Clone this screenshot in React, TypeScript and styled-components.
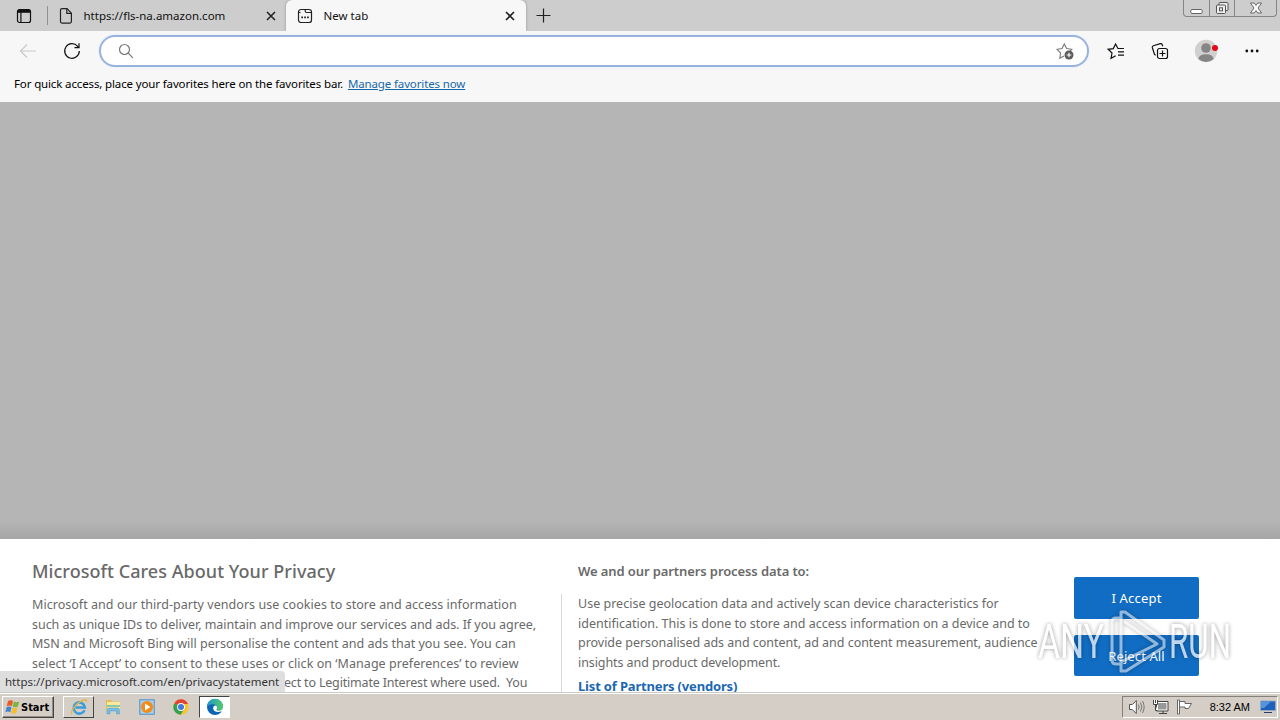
import { FC } from 'react';
import styled, { createGlobalStyle } from 'styled-components';

const leftLines = [
  { text: 'Microsoft and our third-party vendors use cookies to store and access information', spacing: 0.04 },
  { text: 'such as unique IDs to deliver, maintain and improve our services and ads. If you agree,', spacing: -0.03 },
  { text: 'MSN and Microsoft Bing will personalise the content and ads that you see. You can', spacing: 0 },
  { text: 'select ‘I Accept’ to consent to these uses or click on ‘Manage preferences’ to review', spacing: 0.05 },
  { text: 'ect to Legitimate Interest where used.  You', spacing: -0.18, indent: 252 },
];

const rightLines = [
  { text: 'Use precise geolocation data and actively scan device characteristics for', spacing: 0.01 },
  { text: 'identification. This is done to store and access information on a device and to', spacing: 0 },
  { text: 'provide personalised ads and content, ad and content measurement, audience', spacing: -0.03 },
  { text: 'insights and product development.', spacing: -0.08 },
];

const TabActionsIcon = () => (
  <svg width="16" height="16" viewBox="0 0 16 16" fill="none" stroke="#111">
    <rect x="1.5" y="1.5" width="13" height="13" rx="2" strokeWidth="1.2" />
    <path d="M2 3.3h12" strokeWidth="3" />
    <path d="M4.9 4v10.5" strokeWidth="1.2" />
  </svg>
);

const PageIcon = () => (
  <svg width="14" height="18" viewBox="0 0 14 18" fill="none" stroke="#222" strokeWidth="1.2">
    <path d="M3 1.6h5l4.4 4.6v8.4q0 1.5-1.5 1.5H3q-1.5 0-1.5-1.5V3.1Q1.5 1.6 3 1.6z" />
    <path d="M7.8 1.8v4.5h4.5" />
  </svg>
);

const NewTabIcon = () => (
  <svg width="16" height="16" viewBox="0 0 16 16" fill="none" stroke="#222" strokeWidth="1.2">
    <rect x="1.5" y="1.5" width="13" height="13" rx="2.6" />
    <path d="M8.2 1.5v1.5q0 1.5 1.5 1.5h4.800M1.5 4.500h2" />
    <path d="M4.3 9.3h1.7M7.2 9.3h1.7M10.100 9.300h1.700" strokeWidth="1.800" />
  </svg>
);

const CloseIcon = () => (
  <svg width="10" height="10" viewBox="0 0 10 10" stroke="#222" strokeWidth="1.6">
    <path d="M1 1l8 8M9 1L1 9" />
  </svg>
);

const PlusIcon = () => (
  <svg width="15" height="15" viewBox="0 0 15 15" stroke="#222" strokeWidth="1.2">
    <path d="M7.5 .5v14M.5 7.500h14" />
  </svg>
);

const BackIcon = () => (
  <svg width="18" height="16" viewBox="0 0 18 16" fill="none" stroke="#c9c9c9" strokeWidth="1.2">
    <path d="M17 8H1.5M8 1.500L1.500 8 8 14.500" />
  </svg>
);

const ReloadIcon = () => (
  <svg width="18" height="18" viewBox="0 0 18 18" fill="none" stroke="#111" strokeWidth="1.2">
    <path d="M16.3 9A7.300 7.300 0 1 1 14.600 4.300L16 5.600" />
    <path d="M16 1.200v4.500h-4.500" />
  </svg>
);

const SearchIcon = () => (
  <svg width="16" height="16" viewBox="0 0 16 16" fill="none" stroke="#777" strokeWidth="1.2">
    <circle cx="6.500" cy="6.500" r="5" />
    <path d="M10.200 10.200l4.600 4.600" />
  </svg>
);

const AddFavoriteIcon = () => (
  <svg width="18" height="18" viewBox="0 0 18 18" fill="none" stroke="#777" strokeWidth="1.1">
    <path d="M8 14l-4.200 2.200.8-5.200L1 7.300l5-.7L8.300 2l2.300 4.600 5.200.7-2 2" />
    <circle cx="13" cy="13" r="4.500" fill="#5c5c5c" stroke="none" />
    <path d="M13 10.700v4.600M10.700 13h4.600" stroke="#fff" />
  </svg>
);

const FavoritesIcon = () => (
  <svg width="18" height="18" viewBox="0 0 18 18" fill="none" stroke="#111" strokeWidth="1.2">
    <path d="M8.700 13.700l-4.700 2.600 1-5.300L1.200 7.300l5.100-.7L8.600 2l2.300 4.500h6" />
    <path d="M11 9.800h6M11 13.200h6" />
  </svg>
);

const CollectionsIcon = () => (
  <svg width="18" height="18" viewBox="0 0 18 18" fill="none" stroke="#111" strokeWidth="1.2">
    <rect x="6.500" y="6.500" width="10" height="10" rx="2" />
    <path d="M11.500 8.500v6M8.500 11.500h6" />
    <path d="M4.700 13.200L3.500 12.400 1.300 5.500q-.3-1.400 1-1.800L9.300 1.600q1.400-.3 1.900 1l.6 1.600" />
  </svg>
);

const ProfileIcon = () => (
  <svg width="24" height="24" viewBox="0 0 24 24">
    <circle cx="12" cy="12" r="11.200" fill="#d2d0ce" />
    <circle cx="12" cy="9" r="4.800" fill="#858585" />
    <path d="M4.300 20Q5 15.300 12 15.300T19.700 20Q12 26 4.300 20z" fill="#858585" />
    <circle cx="21" cy="9" r="3" fill="#e10b17" />
  </svg>
);

const MoreIcon = () => (
  <svg width="14" height="4" viewBox="0 0 14 4" fill="#111">
    <circle cx="1.800" cy="2" r="1.400" />
    <circle cx="7" cy="2" r="1.400" />
    <circle cx="12.200" cy="2" r="1.400" />
  </svg>
);

const WindowsIcon = () => (
  <svg width="16" height="16" viewBox="0 0 16 16">
    <path d="M3 2q2.500-1.700 5 0L6.800 7.200q-2.500-1.500-5 0z" fill="#e65a28" />
    <path d="M8.800 2.600q2.500 1.500 5.500 0L12.900 7.600q-2.800 1.400-5.200 0z" fill="#79b540" />
    <path d="M1.600 8.300q2.500-1.600 4.900 0L5.200 13.300q-2.500-1.500-4.800 0z" fill="#3c87cf" />
    <path d="M7.400 8.600q2.500 1.500 5.200 0L11.200 13.900q-2.500 1.400-5.100 0z" fill="#f3bd2e" />
  </svg>
);

const IeIcon = () => (
  <svg width="18" height="18" viewBox="0 0 18 18" fill="none">
    <path d="M14.500 12.200A5.600 5.600 0 1 1 14.900 9.500H5.500" stroke="#3b9edb" strokeWidth="2.600" />
    <path d="M2 16.200C-.5 14 6 5.500 12 2.700c4-1.900 5-.7 4.200 1.500" stroke="#e3b63c" strokeWidth="1.300" />
  </svg>
);

const ExplorerIcon = () => (
  <svg width="18" height="18" viewBox="0 0 18 18">
    <path d="M2 2h5l1 1.500h7V13H2z" fill="#e2bd58" />
    <path d="M3 4h13v9H3z" fill="#f8e8a0" />
    <path d="M3 7h13v2H3z" fill="#8fc8a0" />
    <path d="M3 16v-4q0-2 2-2h8.500q2 0 2 2v4h-3v-3H6v3z" fill="#77bce2" stroke="#5499c4" strokeWidth=".5" />
  </svg>
);

const MediaIcon = () => (
  <svg width="16" height="18" viewBox="0 0 16 18">
    <rect x=".8" y="1.800" width="14.400" height="14.400" fill="#a9d1ec" stroke="#4a91c8" />
    <circle cx="8" cy="9" r="6" fill="#f28b18" />
    <path d="M6 5.600v6.800l5.400-3.400z" fill="#fff" />
  </svg>
);

const ChromeIcon = () => (
  <svg width="16" height="16" viewBox="0 0 16 16">
    <circle cx="8" cy="8" r="7.700" fill="#f6c52d" />
    <path d="M8 8L1.330 4.150A7.700 7.700 0 0 1 14.670 4.150L15 5H8z" fill="#df4535" />
    <path d="M1.330 4.150A7.700 7.700 0 0 0 7.700 15.700L11 10 8 8z" fill="#34a052" />
    <circle cx="8" cy="8" r="3.900" fill="#fff" />
    <circle cx="8" cy="8" r="3" fill="#3e79db" />
  </svg>
);

const EdgeIcon = () => (
  <svg width="18" height="18" viewBox="0 0 18 18">
    <defs>
      <linearGradient id="edgeTop" x1="0" x2="1">
        <stop offset="0" stopColor="#1b96d4" />
        <stop offset="1" stopColor="#55cc65" />
      </linearGradient>
    </defs>
    <circle cx="9" cy="9" r="8" fill="#0c64b5" />
    <path d="M1 9a8 8 0 0 1 16-.4c0 3-2 4.200-4.300 4.200-1.700 0-2.700-.6-2-1.700C12 9 10.300 6.200 6.800 6.200 3.500 6.200 1.300 8 1 9z" fill="url(#edgeTop)" />
    <path d="M9.900 7.400C7.800 7.300 6.800 9 7.300 11c.6 2.600 4.200 4 8.400 2.300l1.500-1.600V9.500c-.8 2.400-2.700 3.300-4.500 3.300-1.700 0-2.700-.6-2-1.700.8-1.500.3-2.900-.8-3.700z" fill="#fff" />
  </svg>
);

const SpeakerIcon = () => (
  <svg width="17" height="16" viewBox="0 0 17 16" stroke="#555" strokeWidth="1" fill="none">
    <path d="M1.500 5.500h2.800L8.300 1.500v13l-4-4H1.500z" fill="#fff" />
    <path d="M10.400 5.500q1.500 2.500 0 5M12.500 3.500q2.700 4.500 0 9M14.500 2q3.300 6 0 12" stroke="#777" />
  </svg>
);

const NetworkIcon = () => (
  <svg width="17" height="16" viewBox="0 0 17 16" stroke="#444" fill="none">
    <path d="M4.500 2.500h11.500v9.500H4.500z" fill="#fff" />
    <rect x="6.500" y="4.500" width="7.500" height="5.500" fill="#999" stroke="#999" />
    <path d="M7 14.500h8M11 12v2" />
    <path d="M1.500 1v4.500h4V1M3.500 1v3M3.500 5.500v6h2" fill="#fff" />
  </svg>
);

const FlagIcon = () => (
  <svg width="17" height="16" viewBox="0 0 17 16" stroke="#666" fill="#fff">
    <path d="M1.500 1h2v14h-2z" />
    <path d="M3.500 2.500h5.500v2h6.500L12.500 9.500H9V8H3.500z" />
  </svg>
);

const DesktopIcon = () => (
  <svg width="16" height="14" viewBox="0 0 16 14">
    <path d="M.5 1h15v9.500H.5z" fill="#2160b8" stroke="#91a9c9" />
    <path d="M1 1.500h10L4 8H1z" fill="#5794dd" />
    <path d="M4 12.500h8" stroke="#233c66" />
  </svg>
);

const Watermark = () => (
  <WatermarkLayer width="204" height="74" viewBox="0 0 204 74">
    <g fill="#fff" fontFamily="Roboto, sans-serif" fontSize="49" fontWeight="400">
      <text x="4" y="52" textLength="66" lengthAdjust="spacingAndGlyphs">ANY</text>
      <text x="135" y="52" textLength="62" lengthAdjust="spacingAndGlyphs">RUN</text>
    </g>
    <g fill="none" stroke="#fff" strokeWidth="3" strokeLinejoin="round" strokeLinecap="round" opacity=".75">
      <path d="M87 56V6h4l39 28v7L92 65h-5v-9l36-18-32-22" />
      <path d="M87 12h-5q-4 0-4 4v38q0 4 4 4h5" />
    </g>
  </WatermarkLayer>
);

const App: FC = () => {
  return (
    <Screen>
      <GlobalStyle />
      <TabStrip>
        <TabActions>
          <TabActionsIcon />
        </TabActions>
        <Divider />
        <Tab $width={238}>
          <PageIcon />
          <TabTitle $spacing={0}>https://fls-na.amazon.com</TabTitle>
          <CloseIcon />
        </Tab>
        <Tab $width={240} $active>
          <NewTabIcon />
          <TabTitle $spacing={0}>New tab</TabTitle>
          <CloseIcon />
        </Tab>
        <NewTabButton>
          <PlusIcon />
        </NewTabButton>
        <WindowControls>
          <WindowButton $width={25}>
            <svg width="13" height="14" viewBox="0 0 13 14" fill="#fff" stroke="#666">
              <rect x=".8" y="8.500" width="11.400" height="4" rx="1.200" />
            </svg>
          </WindowButton>
          <WindowButton $width={25}>
            <svg width="14" height="14" viewBox="0 0 14 14" fill="#eee" stroke="#555">
              <rect x="4" y="1.500" width="9" height="8" rx="1" />
              <rect x="1.500" y="4" width="9" height="8.500" rx="1" />
              <rect x="4.500" y="6.800" width="3" height="3" />
            </svg>
          </WindowButton>
          <WindowButton $width={42}>
            <svg width="14" height="12" viewBox="0 0 14 12" fill="#fff" stroke="#666">
              <path d="M1.500 1h3.700L7 3.500 8.800 1h3.700L9 6l3.500 5H8.800L7 8.500 5.200 11H1.500L5 6z" />
            </svg>
          </WindowButton>
        </WindowControls>
      </TabStrip>

      <Toolbar>
        <ToolButton $width={28}>
          <BackIcon />
        </ToolButton>
        <ToolButton $width={60}>
          <ReloadIcon />
        </ToolButton>
        <AddressBar>
          <SearchIcon />
          <AddFavoriteIcon />
        </AddressBar>
        <ToolButton $width={54}>
          <FavoritesIcon />
        </ToolButton>
        <ToolButton $width={34}>
          <CollectionsIcon />
        </ToolButton>
        <ToolButton $width={58}>
          <ProfileIcon />
        </ToolButton>
        <ToolButton $width={34}>
          <MoreIcon />
        </ToolButton>
      </Toolbar>

      <FavoritesBar>
        <FavoritesHint>For quick access, place your favorites here on the favorites bar.</FavoritesHint>
        <FavoritesLink>Manage favorites now</FavoritesLink>
      </FavoritesBar>

      <Content />

      <ConsentPanel>
        <PrivacyColumn>
          <PrivacyTitle>Microsoft Cares About Your Privacy</PrivacyTitle>
          <PrivacyText>
            {leftLines.map((line) => (
              <Line key={line.text} $spacing={line.spacing} $indent={line.indent}>
                {line.text}
              </Line>
            ))}
          </PrivacyText>
        </PrivacyColumn>
        <PartnersColumn>
          <PartnersTitle>We and our partners process data to:</PartnersTitle>
          {rightLines.map((line) => (
            <Line key={line.text} $spacing={line.spacing}>
              {line.text}
            </Line>
          ))}
          <PartnersLink>List of Partners (vendors)</PartnersLink>
        </PartnersColumn>
        <ConsentActions>
          <ConsentButton>I Accept</ConsentButton>
          <ConsentButton>Reject All</ConsentButton>
        </ConsentActions>
        <StatusBubble>https://privacy.microsoft.com/en/privacystatement</StatusBubble>
      </ConsentPanel>

      <Taskbar>
        <StartButton>
          <WindowsIcon />
          Start
        </StartButton>
        <TaskButton $look="raised">
          <IeIcon />
        </TaskButton>
        <TaskButton>
          <ExplorerIcon />
        </TaskButton>
        <TaskButton>
          <MediaIcon />
        </TaskButton>
        <TaskButton>
          <ChromeIcon />
        </TaskButton>
        <TaskButton $look="pressed">
          <EdgeIcon />
        </TaskButton>
        <Tray>
          <SpeakerIcon />
          <NetworkIcon />
          <FlagIcon />
          <Clock>8:32 AM</Clock>
          <DesktopIcon />
        </Tray>
      </Taskbar>
      <Watermark />
    </Screen>
  );
};

const GlobalStyle = createGlobalStyle`
  * {
    box-sizing: border-box;
  }

  body {
    margin: 0;
    overflow: hidden;
  }

  svg {
    display: block;
    flex-shrink: 0;
  }
`;

const Screen = styled.div`
  position: relative;
  width: 1280px;
  height: 720px;
  display: flex;
  flex-direction: column;
  overflow: hidden;
  background-color: #b5b5b5;
  font-family: 'Noto Sans', sans-serif;
  white-space: pre;
`;

const TabStrip = styled.div`
  height: 31px;
  flex-shrink: 0;
  display: flex;
  align-items: flex-start;
  background-color: #cdcdcd;
`;

const TabActions = styled.div`
  width: 47px;
  height: 31px;
  display: grid;
  place-items: center;
`;

const Divider = styled.div`
  width: 1px;
  height: 19px;
  margin-top: 6px;
  background-color: #919191;
`;

const Tab = styled.div<{ $width: number; $active?: boolean }>`
  width: ${({ $width }) => $width}px;
  height: 31px;
  padding: ${({ $active }) => ($active ? '0 11px' : '0 10px 0 11px')};
  display: flex;
  align-items: center;
  border-radius: 6px 6px 0 0;
  background-color: ${({ $active }) => ($active ? '#f7f7f7' : 'transparent')};
  box-shadow: ${({ $active }) => ($active ? '0 0 3px rgba(0, 0, 0, 0.3)' : 'none')};
`;

const TabTitle = styled.span<{ $spacing: number }>`
  flex: 1;
  margin-left: 10.5px;
  font-size: 11.5px;
  line-height: 16px;
  letter-spacing: ${({ $spacing }) => $spacing}px;
  color: #111;
`;

const NewTabButton = styled.div`
  padding: 8px 10px;
`;

const WindowControls = styled.div`
  display: flex;
  height: 17px;
  margin-left: auto;
  margin-right: 3px;
  border: 1px solid #858585;
  border-top: none;
  border-radius: 0 0 4px 4px;
`;

const WindowButton = styled.div<{ $width: number }>`
  width: ${({ $width }) => $width}px;
  display: grid;
  place-items: center;

  & + & {
    border-left: 1px solid #858585;
  }
`;

const Toolbar = styled.div`
  height: 39px;
  flex-shrink: 0;
  display: flex;
  align-items: center;
  padding: 1px 0 0 14px;
  background-color: #f7f7f7;
`;

const ToolButton = styled.div<{ $width: number }>`
  width: ${({ $width }) => $width}px;
  display: grid;
  place-items: center;
`;

const AddressBar = styled.div`
  width: 990px;
  height: 32px;
  margin-left: -3px;
  padding: 0 13px 0 17px;
  display: flex;
  align-items: center;
  justify-content: space-between;
  background-color: #fff;
  border: 2px solid #9ab3dc;
  border-radius: 16px;
  box-shadow: 0 0 0 1px #eaf2fb;
`;

const FavoritesBar = styled.div`
  height: 32px;
  flex-shrink: 0;
  display: flex;
  gap: 5px;
  padding: 6px 14px;
  background-color: #f7f7f7;
  font-size: 11.5px;
  line-height: 16px;
`;

const FavoritesHint = styled.span`
  color: #000;
  letter-spacing: -0.135px;
`;

const FavoritesLink = styled.a`
  color: #1769aa;
  letter-spacing: -0.13px;
  text-decoration: underline;
`;

const Content = styled.div`
  flex: 1;
  background: linear-gradient(#b5b5b5 calc(100% - 18px), #a6a6a6);
`;

const ConsentPanel = styled.div`
  position: relative;
  height: 153px;
  flex-shrink: 0;
  display: flex;
  overflow: hidden;
  background-color: #fff;
  font-size: 13px;
  color: #696969;
`;

const PrivacyColumn = styled.div`
  width: 562px;
  padding: 20px 0 0 32px;
`;

const PrivacyTitle = styled.div`
  height: 35px;
  font-size: 18px;
  font-weight: 500;
  line-height: 25px;
  letter-spacing: 0.05px;
`;

const PrivacyText = styled.div`
  height: 110px;
  padding-top: 1px;
  border-right: 1px solid #d8d8d8;
`;

const Line = styled.div<{ $spacing: number; $indent?: number }>`
  height: 19.5px;
  padding-left: ${({ $indent = 0 }) => $indent}px;
  font-size: 12.5px;
  line-height: 19.5px;
  letter-spacing: ${({ $spacing }) => $spacing}px;
`;

const PartnersColumn = styled.div`
  width: 496px;
  margin-left: 16px;
  padding-top: 22px;
`;

const PartnersTitle = styled.div`
  height: 33px;
  font-weight: 600;
  line-height: 20px;
  letter-spacing: -0.1px;
`;

const PartnersLink = styled.a`
  display: block;
  margin-top: 4px;
  font-weight: 700;
  line-height: 20px;
  letter-spacing: -0.17px;
  color: #1b67b2;
`;

const ConsentActions = styled.div`
  padding-top: 38px;
  display: flex;
  flex-direction: column;
  gap: 16px;
`;

const ConsentButton = styled.button`
  width: 125px;
  height: 42px;
  border: none;
  border-radius: 2px;
  background-color: #116dc3;
  color: #fff;
  font-family: inherit;
  font-size: 13px;
  letter-spacing: 0.2px;

  & + & {
    height: 41px;
    letter-spacing: 0.1px;
  }
`;

const StatusBubble = styled.div`
  position: absolute;
  left: 0;
  bottom: 0;
  width: 285px;
  height: 21px;
  padding-left: 5px;
  border-radius: 0 4px 0 0;
  background-color: #dedede;
  color: #333;
  font-size: 11.5px;
  line-height: 21px;
`;

const Taskbar = styled.div`
  height: 28px;
  flex-shrink: 0;
  display: flex;
  align-items: center;
  gap: 3px;
  padding: 1px 2px 0;
  border-top: 1px solid #c9cac3;
  box-shadow: inset 0 1px #fff;
  background-color: #d5cec6;
`;

const StartButton = styled.div`
  width: 52px;
  height: 22px;
  margin-right: 6px;
  padding-left: 2px;
  display: flex;
  align-items: center;
  border: 1px solid;
  border-color: #fff #444 #444 #fff;
  box-shadow: inset -1px -1px #918c85;
  font-family: 'DejaVu Sans Condensed', sans-serif;
  font-size: 11px;
  font-weight: 700;
  color: #000;
`;

const TaskButton = styled.div<{ $look?: 'raised' | 'pressed' }>`
  width: 31px;
  height: 22px;
  display: grid;
  place-items: center;
  border: 1px solid;
  border-color: ${({ $look }) => {
    if ($look === 'raised') return '#fff #444 #444 #fff';
    if ($look === 'pressed') return '#444 #fff #fff #444';
    return 'transparent';
  }};
  background-color: ${({ $look }) => ($look === 'pressed' ? '#fff' : 'transparent')};
`;

const Tray = styled.div`
  width: 156px;
  height: 22px;
  margin-left: auto;
  padding: 0 1px 0 5px;
  display: flex;
  align-items: center;
  gap: 7px;
  border: 1px solid;
  border-color: #858078 #fff #fff #858078;
`;

const Clock = styled.span`
  margin-left: auto;
  margin-right: 3px;
  font-family: 'Liberation Sans', sans-serif;
  font-size: 11px;
  color: #000;
`;

const WatermarkLayer = styled.svg`
  position: absolute;
  left: 1034px;
  top: 606px;
  opacity: 0.72;
  filter: drop-shadow(0 0 2px rgba(0, 0, 0, 0.55));
  pointer-events: none;
`;

export default App;
